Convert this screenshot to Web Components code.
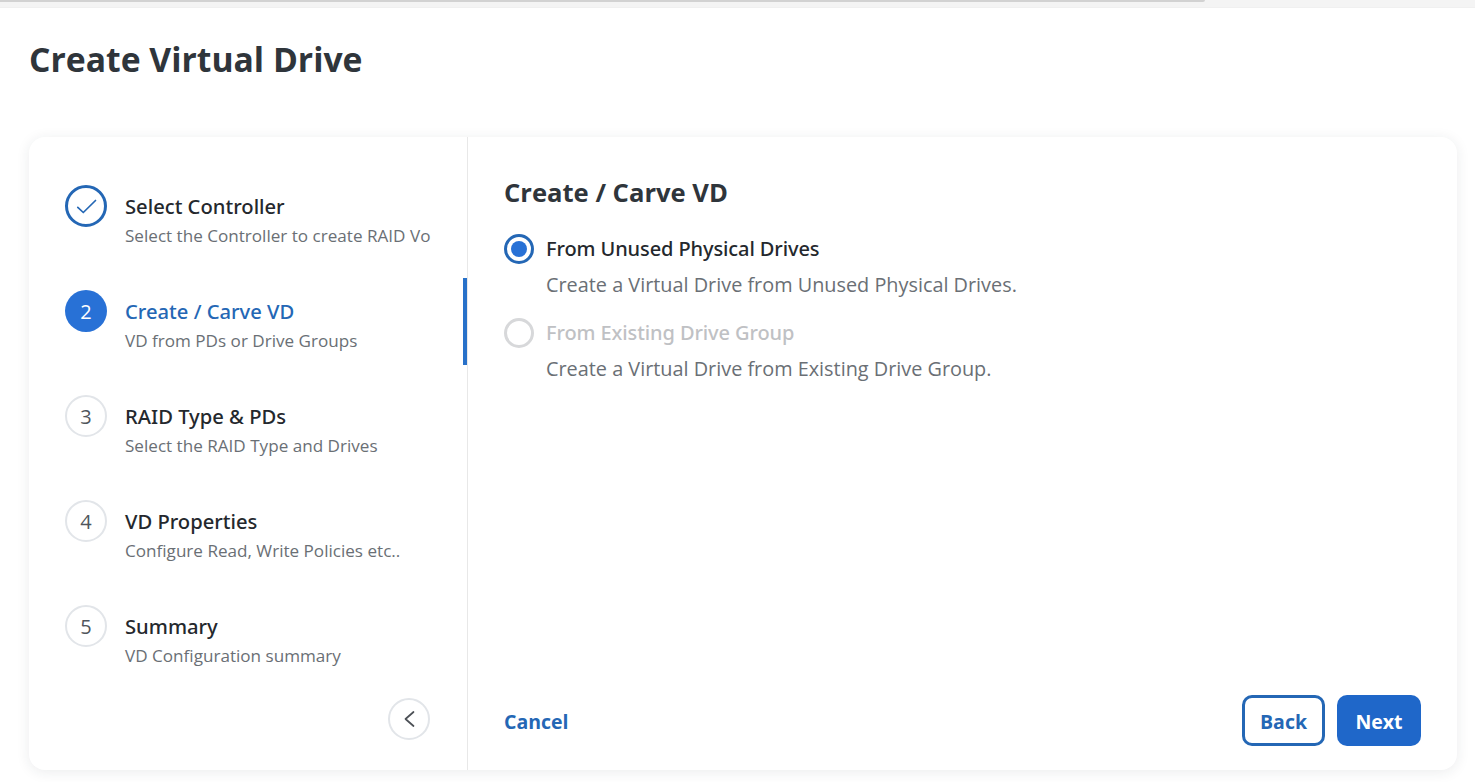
<!DOCTYPE html>
<html lang="en"><head><meta charset="utf-8"><title>Create Virtual Drive</title>
<style>
html,body{margin:0;padding:0;background:#fff;height:782px;overflow:hidden}
body{font-family:"Open Sans","Noto Sans","Liberation Sans",sans-serif;color:#22262b}
</style></head><body>
<browser-strip></browser-strip>
<wizard-page heading="Create Virtual Drive">
  <wizard-card>
    <wizard-step slot="steps" state="done" label="Select Controller" hint="Select the Controller to create RAID Vo"></wizard-step>
    <wizard-step slot="steps" state="active" num="2" label="Create / Carve VD" hint="VD from PDs or Drive Groups"></wizard-step>
    <wizard-step slot="steps" num="3" label="RAID Type &amp; PDs" hint="Select the RAID Type and Drives"></wizard-step>
    <wizard-step slot="steps" num="4" label="VD Properties" hint="Configure Read, Write Policies etc.."></wizard-step>
    <wizard-step slot="steps" num="5" label="Summary" hint="VD Configuration summary"></wizard-step>
    <collapse-button slot="collapse"></collapse-button>
    <h-title slot="title">Create / Carve VD</h-title>
    <radio-option slot="options" checked label="From Unused Physical Drives" hint="Create a Virtual Drive from Unused Physical Drives."></radio-option>
    <radio-option slot="options" disabled label="From Existing Drive Group" hint="Create a Virtual Drive from Existing Drive Group."></radio-option>
    <wiz-button slot="cancel" kind="link">Cancel</wiz-button>
    <wiz-button slot="actions" kind="outline">Back</wiz-button>
    <wiz-button slot="actions" kind="solid">Next</wiz-button>
  </wizard-card>
</wizard-page>
<script>
function def(name, html){
  customElements.define(name, class extends HTMLElement{
    connectedCallback(){
      if(this.shadowRoot) return;
      const r=this.attachShadow({mode:'open'});
      r.innerHTML=typeof html==='function'?html(this):html;
    }
  });
}
const esc=s=>(s||'').replace(/&/g,'&amp;').replace(/</g,'&lt;');
def('browser-strip',`<style>
:host{display:block;height:8px;background:#f4f4f4;border-bottom:1px solid #f0f0f0;box-sizing:border-box}
.l{height:2px;width:1205px;background:#d2d2d2;border-radius:0 0 8px 0}
</style><div class="l"></div>`);
def('wizard-page',h=>`<style>
:host{display:block;padding:0 18px 0 29px}
h1{margin:0;height:129px;box-sizing:border-box;padding-top:27px;font:700 33.7px/48px "Open Sans","Noto Sans",sans-serif;color:#2f353b}
</style><h1>${esc(h.getAttribute('heading'))}</h1><slot></slot>`);
def('wizard-card',`<style>
:host{display:grid;grid-template-columns:439px 1fr;grid-template-rows:633px;height:633px;background:#fff;border-radius:16px;box-shadow:0 2px 14px rgba(30,40,60,.09)}
.side{border-right:1px solid #e8e8e8;display:flex;flex-direction:column;padding-top:48px;box-sizing:border-box;min-height:0}
.steps{display:flex;flex-direction:column;gap:30px}
.col{margin-top:auto;display:flex;justify-content:flex-end;padding:0 37px 30px 0}
.main{display:flex;flex-direction:column;padding:36px 36px 24px 36px;box-sizing:border-box;min-width:0;min-height:0}
.opts{display:flex;flex-direction:column;margin-top:20px}
.foot{margin-top:auto;display:flex;align-items:center;justify-content:space-between}
.act{display:flex;gap:12px}
</style>
<div class="side"><div class="steps"><slot name="steps"></slot></div><div class="col"><slot name="collapse"></slot></div></div>
<div class="main"><slot name="title"></slot><div class="opts"><slot name="options"></slot></div>
<div class="foot"><slot name="cancel"></slot><div class="act"><slot name="actions"></slot></div></div></div>`);
def('wizard-step',h=>{
  const st=h.getAttribute('state')||'';
  const inner=st==='done'?`<svg width="42" height="42" viewBox="0 0 42 42" fill="none"><path d="M12.8 22.3l5.5 5.2L30.5 15.5" stroke="#2467b5" stroke-width="1.7" stroke-linecap="round" stroke-linejoin="round"/></svg>`:esc(h.getAttribute('num'));
  return `<style>
:host{display:flex;height:75px;box-sizing:border-box;padding-left:36px;gap:18px;position:relative;align-items:flex-start}
.c{width:42px;height:42px;border-radius:50%;box-sizing:border-box;border:2.5px solid #e2e5e9;color:#50565c;display:flex;align-items:center;justify-content:center;font:400 20px/1 "Open Sans",sans-serif;flex:none;background:#fff;padding-top:1px}
.c svg{flex:none;margin:-2.5px}
:host([state=done]) .c{border:3px solid #2467b5;padding-top:0}
:host([state=active]) .c{background:#2871d6;border:none;color:#fff}
.t{font:500 20.2px/27px "Noto Sans","Open Sans",sans-serif;color:#24282d;margin-top:8px;white-space:nowrap}
:host([state=active]) .t{color:#2467b5}
.s{font:400 17.1px/24px "Open Sans",sans-serif;color:#6a6f75;margin-top:4px;white-space:nowrap}
.b{display:none;position:absolute;right:0;top:-12px;width:4px;height:87px;background:#2871c9}
:host([state=active]) .b{display:block}
</style><div class="c">${inner}</div><div><div class="t">${esc(h.getAttribute('label'))}</div><div class="s">${esc(h.getAttribute('hint'))}</div></div><div class="b"></div>`;
});
def('collapse-button',`<style>
:host{display:flex;width:42px;height:42px;border-radius:50%;box-sizing:border-box;border:2.5px solid #e2e5e9;align-items:center;justify-content:center}
</style><svg width="14" height="20" viewBox="0 0 14 20" fill="none"><path d="M11.5 3L3.5 10l8 7" stroke="#4c5056" stroke-width="1.7" stroke-linecap="round" stroke-linejoin="round"/></svg>`);
def('h-title',`<style>
:host{display:block;font:700 25.6px/40px "Open Sans","Noto Sans",sans-serif;color:#2f353b}
</style><slot></slot>`);
def('radio-option',h=>`<style>
:host{display:grid;grid-template-columns:30px 1fr;column-gap:12px;height:84px;align-content:start}
.r{width:30px;height:30px;border-radius:50%;box-sizing:border-box;border:3px solid #2467b5;display:flex;align-items:center;justify-content:center;margin-top:1px}
.r i{display:block;width:16px;height:16px;border-radius:50%;background:#2871d6}
:host([disabled]) .r{border-color:#d7d8da}
:host([disabled]) .r i{display:none}
.l{font:500 20px/32px "Noto Sans","Open Sans",sans-serif;color:#24282d;white-space:nowrap;letter-spacing:-.1px}
:host([disabled]) .l{color:#bfc1c4}
.s{grid-column:2;font:400 19.85px/32px "Open Sans",sans-serif;color:#6a6f75;margin-top:4px;white-space:nowrap}
</style><div class="r"><i></i></div><div class="l">${esc(h.getAttribute('label'))}</div><div class="s">${esc(h.getAttribute('hint'))}</div>`);
def('wiz-button',`<style>
:host{display:inline-flex;align-items:center;justify-content:center;box-sizing:border-box;font:700 19.5px/1 "Open Sans","Noto Sans",sans-serif;border-radius:10px;height:51px;padding-top:2px}
:host([kind=link]){color:#2467b5;background:none}
:host([kind=outline]){width:83px;border:3px solid #2467b5;color:#2467b5;background:#fff}
:host([kind=solid]){width:84px;background:#1f67c9;color:#fff}
</style><slot></slot>`);
</script>
</body></html>
